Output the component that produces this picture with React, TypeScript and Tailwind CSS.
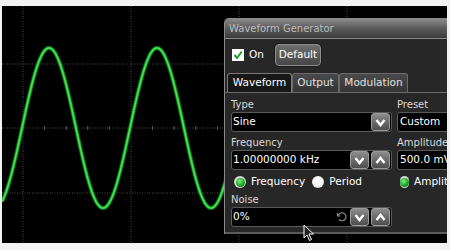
import React from 'react'

const font = { fontFamily: '"DejaVu Sans", Verdana, sans-serif' }

function wavePath() {
  const pts: string[] = []
  for (let x = 0; x <= 240; x += 1) {
    const y = 122 - 80 * Math.cos((2 * Math.PI * (x - 47)) / 108)
    pts.push(`${x === 0 ? 'M' : 'L'}${x} ${y.toFixed(2)}`)
  }
  return pts.join(' ')
}

function Scope() {
  const vx = [21, 129, 237, 345]
  const hy = [58, 122, 187]
  const ticks: number[] = []
  for (let x = 21; x < 445; x += 21.6) ticks.push(x)
  return (
    <svg width="445" height="237" className="absolute left-0 top-0">
      {vx.map((x) => (
        <line key={x} x1={x} y1={0} x2={x} y2={237} stroke="#4a4a4a" strokeDasharray="1 1.5" />
      ))}
      {hy.map((y) => (
        <line key={y} x1={0} y1={y} x2={445} y2={y} stroke="#4a4a4a" strokeDasharray="1 1.5" />
      ))}
      {ticks.map((x) => (
        <line key={x} x1={x} y1={120} x2={x} y2={124} stroke="#5a5a5a" />
      ))}
      <path d={wavePath()} fill="none" stroke="#0f6e1c" strokeWidth="4.5" opacity="0.6" />
      <path d={wavePath()} fill="none" stroke="#1fb52f" strokeWidth="2.8" />
      <path d={wavePath()} fill="none" stroke="#4be85a" strokeWidth="1.2" />
    </svg>
  )
}

function Chevron({ up }: { up?: boolean }) {
  return (
    <svg width="11" height="9" viewBox="0 0 11 9">
      <path
        d={up ? 'M1.5 7 L5.5 2 L9.5 7' : 'M1.5 2 L5.5 7 L9.5 2'}
        fill="none"
        stroke="#fff"
        strokeWidth="2.4"
      />
    </svg>
  )
}

function SpinBtn({ up }: { up?: boolean }) {
  return (
    <div className="flex h-[18px] w-[19px] items-center justify-center rounded-[3px] border border-[#9a9a9a] bg-gradient-to-b from-[#8c8c8c] to-[#4e4e4e]">
      <Chevron up={up} />
    </div>
  )
}

function Field({ value, children }: { value: string; children?: React.ReactNode }) {
  return (
    <div className="flex h-[20px] w-[161px] items-center rounded-[3px] border border-[#5a5a5a] bg-black px-[1px]">
      <span className="flex-1 text-[10.5px] text-white">{value}</span>
      {children}
    </div>
  )
}

function Radio({ on }: { on: boolean }) {
  return on ? (
    <div className="flex h-[12px] w-[12px] items-center justify-center rounded-full bg-[#d8d8d8]">
      <div className="h-[9px] w-[9px] rounded-full bg-[radial-gradient(circle_at_40%_35%,#7cf07c,#13a020_60%,#0a6a12)]" />
    </div>
  ) : (
    <div className="h-[12px] w-[12px] rounded-full bg-[radial-gradient(circle_at_40%_35%,#ffffff,#f4f4f4_55%,#c8c8c8)]" />
  )
}

function Panel() {
  return (
    <div className="absolute left-[222px] top-[12px] h-[216px] w-[240px] overflow-hidden rounded-t-[5px] border-l border-t border-[#8a8a8a] bg-[#272727]" style={font}>
      <div className="flex h-[20px] items-center border-b border-[#8a8a8a] bg-gradient-to-b from-[#8a8a8a] via-[#5a5a5a] to-[#3c3c3c] pl-[4px] text-[10px] text-[#bcbcbc]">
        Waveform Generator
      </div>
      <div className="flex h-[28px] items-center pl-[7px] pt-[4px]">
        <div className="flex h-[12px] w-[12px] items-center justify-center bg-white">
          <svg width="10" height="10" viewBox="0 0 10 10">
            <path d="M1.5 5 L4 8 L8.8 1.5" fill="none" stroke="#18a028" strokeWidth="2" />
          </svg>
        </div>
        <span className="ml-[5px] text-[10.5px] text-white">On</span>
        <div className="ml-[11px] flex h-[22px] w-[46px] items-center justify-center rounded-[4px] border border-[#8e8e8e] bg-gradient-to-b from-[#6e6e6e] to-[#464646] text-[10.5px] text-white shadow-[0_0_0_1px_#1a1a1a]">
          Default
        </div>
      </div>
      <div className="mt-[6px] flex h-[20px] border-b border-[#6a6a6a] pl-[2px]">
        <div className="flex w-[65px] items-center justify-center rounded-t-[3px] border border-b-0 border-[#7a7a7a] bg-[#171717] text-[10.5px] text-white">
          Waveform
        </div>
        <div className="flex w-[47px] items-center justify-center rounded-t-[3px] border border-b-0 border-[#6a6a6a] bg-gradient-to-b from-[#4a4a4a] to-[#343434] text-[10.5px] text-[#e0e0e0]">
          Output
        </div>
        <div className="flex w-[69px] items-center justify-center rounded-t-[3px] border border-b-0 border-[#6a6a6a] bg-gradient-to-b from-[#4a4a4a] to-[#343434] text-[10.5px] text-[#e0e0e0]">
          Modulation
        </div>
      </div>
      <div className="flex gap-[5px] pl-[6px] pt-[4px]">
        <div className="flex w-[161px] flex-col">
          <span className="h-[15px] text-[10px] leading-[15px] text-[#d8d8d8]">Type</span>
          <Field value="Sine">
            <SpinBtn />
          </Field>
          <span className="mt-[3px] h-[15px] text-[10px] leading-[15px] text-[#d8d8d8]">Frequency</span>
          <Field value="1.00000000 kHz">
            <div className="flex gap-[2px]">
              <SpinBtn />
              <SpinBtn up />
            </div>
          </Field>
          <div className="mt-[6px] flex h-[12px] items-center pl-[3px]">
            <Radio on />
            <span className="ml-[5px] text-[10.5px] text-white">Frequency</span>
            <div className="ml-[7px]">
              <Radio on={false} />
            </div>
            <span className="ml-[5px] text-[10.5px] text-white">Period</span>
          </div>
          <span className="mt-[4px] h-[15px] text-[10px] leading-[15px] text-[#d8d8d8]">Noise</span>
          <Field value="0%">
            <svg width="12" height="12" viewBox="0 0 24 24" className="mr-[2px]" fill="none" stroke="#8a8a8a" strokeWidth="2.4">
              <path d="M4 10a8 8 0 1 1 2 7" />
              <path d="M3 4v6h6" />
            </svg>
            <div className="flex gap-[2px]">
              <SpinBtn />
              <SpinBtn up />
            </div>
          </Field>
        </div>
        <div className="flex w-[60px] flex-col">
          <span className="h-[15px] text-[10px] leading-[15px] text-[#d8d8d8]">Preset</span>
          <div className="flex h-[20px] items-center rounded-[3px] border border-[#5a5a5a] bg-black pl-[2px] text-[10.5px] text-white">
            Custom
          </div>
          <span className="mt-[3px] h-[15px] whitespace-nowrap text-[10px] leading-[15px] text-[#d8d8d8]">Amplitude</span>
          <div className="flex h-[20px] items-center whitespace-nowrap rounded-[3px] border border-[#5a5a5a] bg-black pl-[2px] text-[10.5px] text-white">
            500.0 mV
          </div>
          <div className="mt-[6px] flex h-[12px] items-center pl-[3px]">
            <Radio on />
            <span className="ml-[5px] text-[10.5px] text-white">Amplitude</span>
          </div>
        </div>
      </div>
      <div className="absolute bottom-0 left-0 right-0 h-[2px] bg-[#5a5a5a]" />
    </div>
  )
}

export default function App() {
  return (
    <div className="h-[250px] w-[450px] bg-[#f2f2f2] pl-[2px] pt-[6px]">
      <div className="relative h-[237px] w-[445px] overflow-hidden bg-black">
        <Scope />
        <Panel />
        <svg width="12" height="18" viewBox="0 0 12 18" className="absolute left-[301px] top-[218px]">
          <path d="M1 1 L1 14 L4 11 L6.5 16.5 L8.5 15.5 L6 10 L10.5 10 Z" fill="#222" stroke="#fff" strokeWidth="1" />
        </svg>
      </div>
    </div>
  )
}
